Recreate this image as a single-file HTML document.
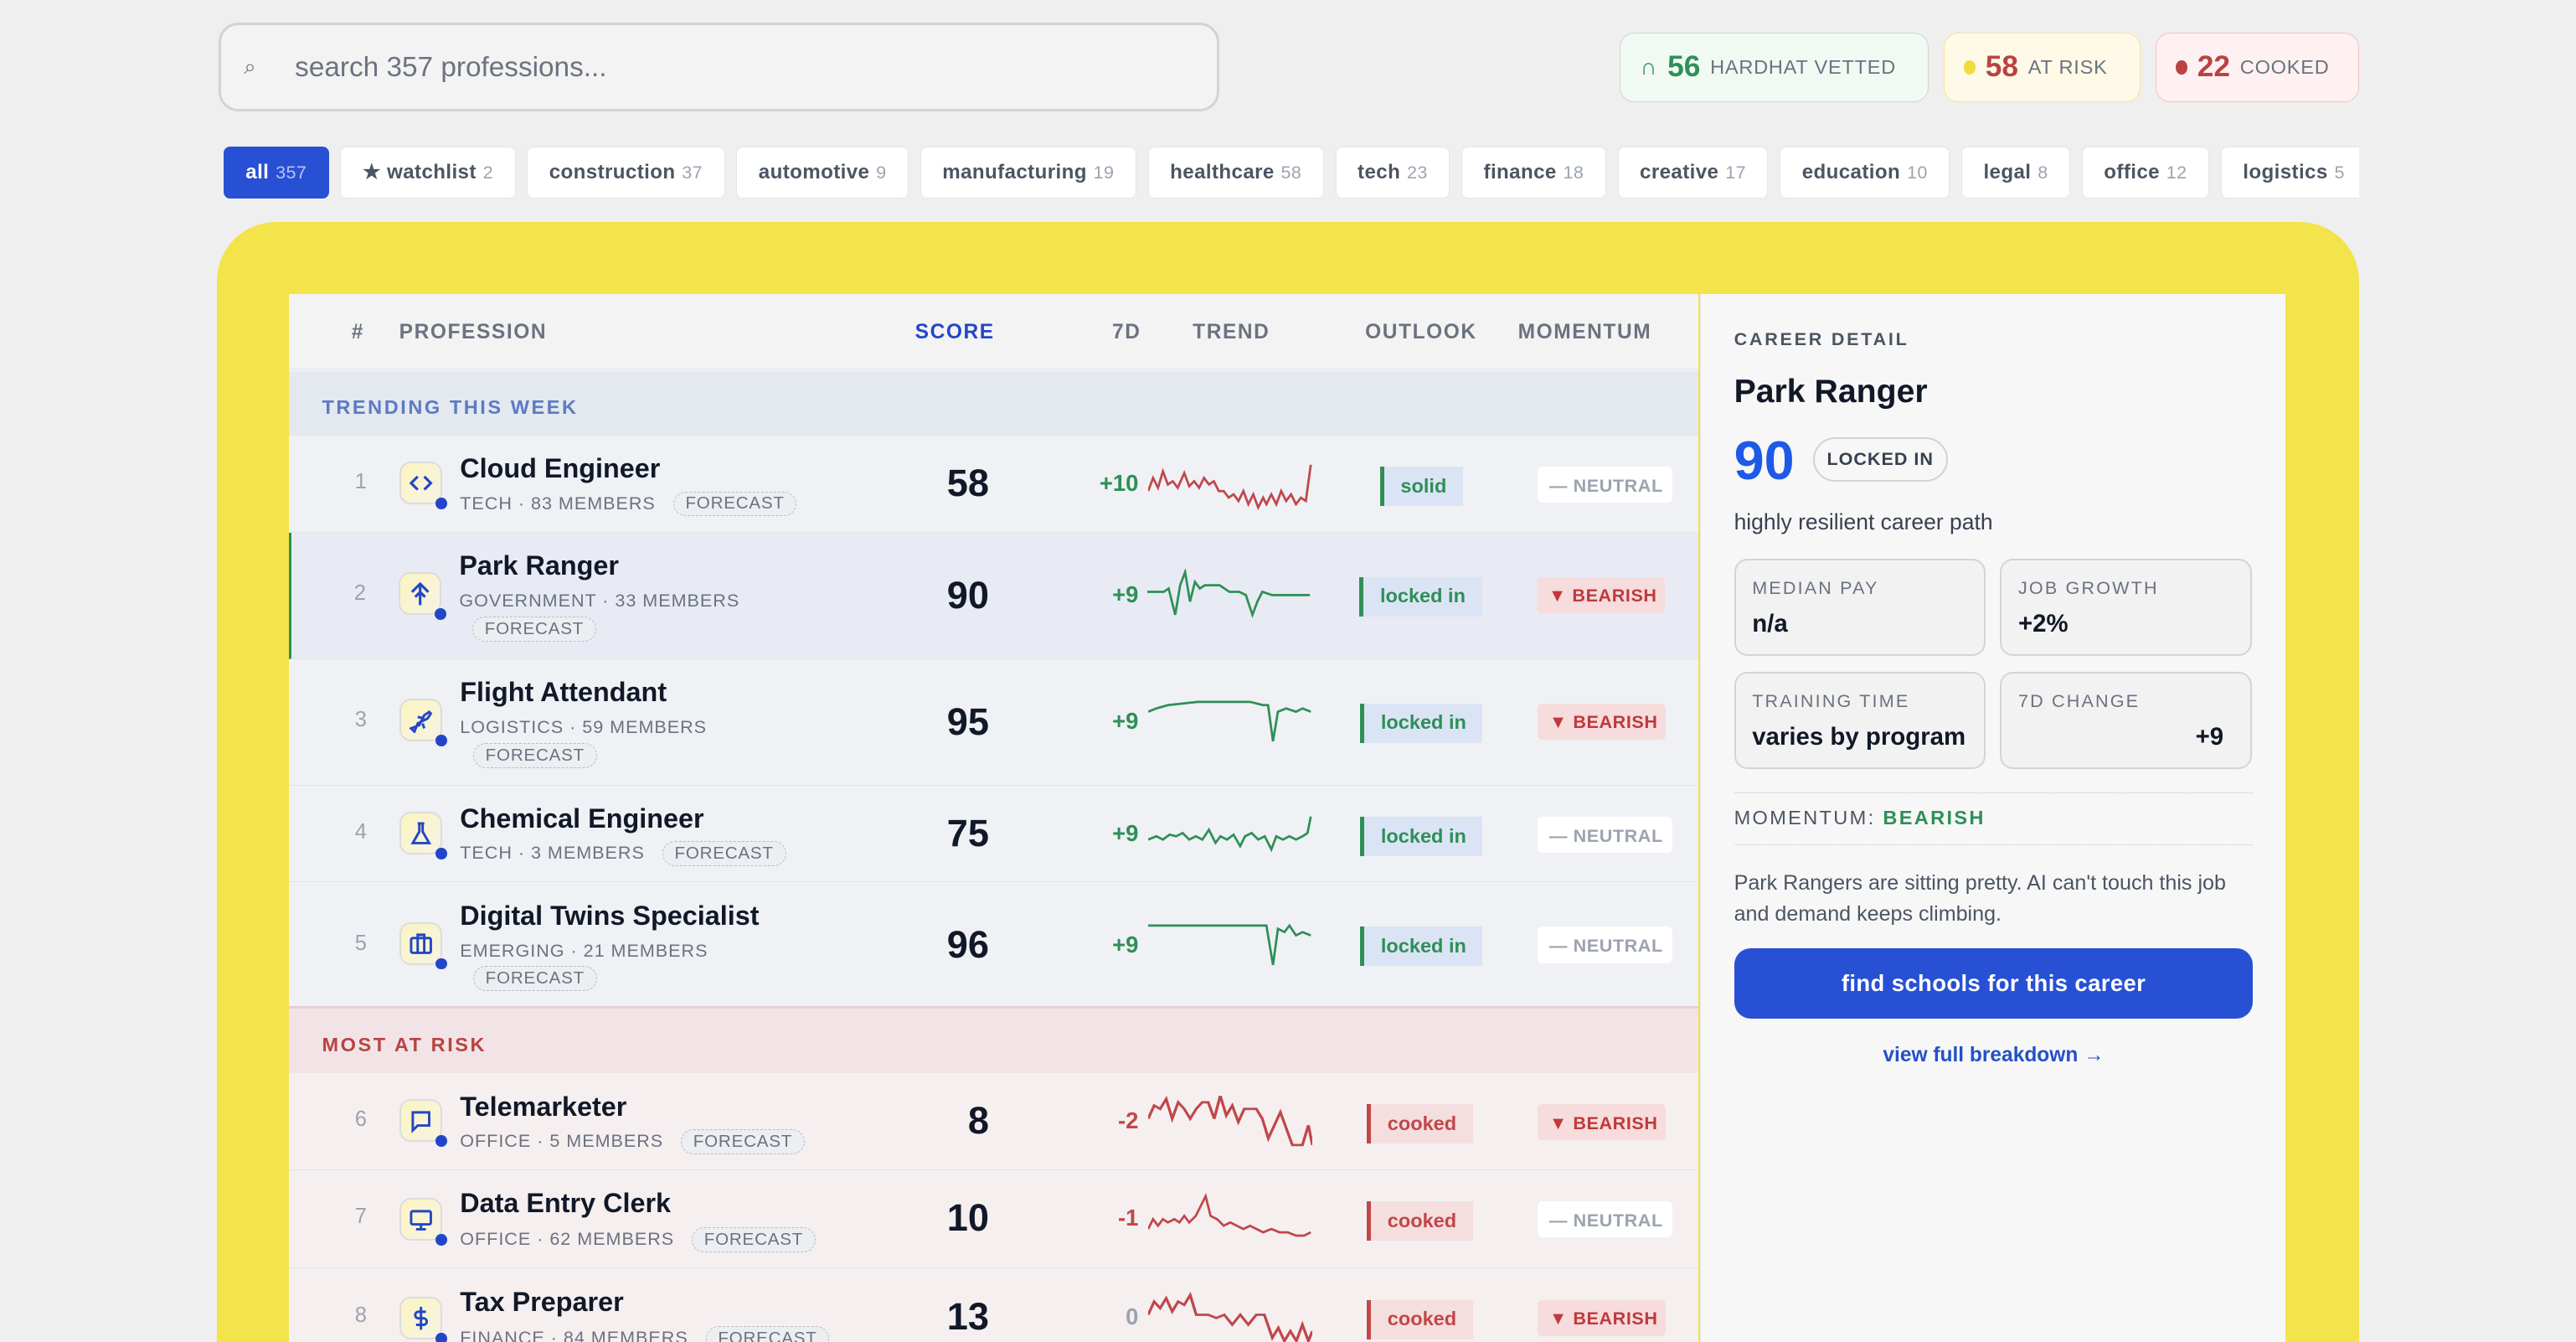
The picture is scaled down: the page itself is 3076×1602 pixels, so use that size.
<!DOCTYPE html>
<html><head><meta charset="utf-8">
<style>
*{box-sizing:border-box;margin:0;padding:0}
html,body{width:3076px;height:1602px;overflow:hidden;background:#efefef}
#r{zoom:1.9617;width:1568px;height:817px;position:relative;font-family:"Liberation Sans",sans-serif;color:#111827;overflow:hidden}
.abs{position:absolute}
.search{left:133px;top:14px;width:609px;height:54px;border:2px solid #d0d4d4;border-radius:12px;background:#f3f3f3}
.search span{position:absolute;top:16px;font-size:17px;color:#6b7280}
.badge{top:20px;height:42px;border-radius:9px;border:1px solid;display:flex;align-items:center;padding:0 12px;gap:6px;font-size:12px;color:#6b7280;letter-spacing:.4px;white-space:nowrap}
.badge b{font-size:18px;letter-spacing:0}
.chips{left:136px;top:89px;width:1300px;height:32px;display:flex;gap:7px;overflow:hidden}
.chip{flex:none;height:32px;border:1px solid #e3e6ea;border-radius:4px;background:#fff;padding:0 13px;display:flex;align-items:center;gap:4px;font-size:12.3px;font-weight:bold;color:#4b5563;letter-spacing:.2px;white-space:nowrap}
.chip i{font-style:normal;font-size:11px;color:#9ca3af;font-weight:normal}
.yel{left:132px;top:135px;width:1304px;height:720px;background:#f2e44a;border-radius:36px}
.table{left:176px;top:179px;width:858px;height:640px;background:#eff1f5}
.th{position:absolute;top:0;left:0;width:858px;height:46px;background:#f3f3f3;border-bottom:1px solid #e2e5ea}
.th span{position:absolute;top:16px;font-size:12.5px;font-weight:bold;color:#6b7280;letter-spacing:.8px}
.sec{position:absolute;left:0;width:858px;height:39px;font-size:12px;font-weight:bold;letter-spacing:1.3px;padding:15px 0 0 20px}
.row{position:absolute;left:0;width:858px;border-bottom:1px solid #e2e5ea}
.row .n{position:absolute;left:40px;font-size:13px;color:#9ca3af}
.ic{position:absolute;left:67px;width:26px;height:26px;border-radius:7px;background:linear-gradient(135deg,#fbf4c0,#f7f3e3);border:1.5px solid #dcdcdc}
.ic svg{position:absolute;left:4px;top:4px}
.ic:after{content:"";position:absolute;right:-4px;bottom:-4px;width:7px;height:7px;border-radius:50%;background:#2346c8}
.nm{position:absolute;left:104px;font-size:16.5px;font-weight:bold;color:#111827;white-space:nowrap}
.meta{position:absolute;left:104px;font-size:11px;color:#6b7280;letter-spacing:.5px;white-space:nowrap}
.fc{display:inline-block;border:1px dashed #b9bec6;border-radius:8px;padding:1px 7px;font-size:10.5px;color:#6b7280;background:#eceef1;letter-spacing:.4px}
.sc{position:absolute;right:432px;font-size:23px;font-weight:bold;color:#111827}
.d7{position:absolute;right:341px;font-size:14px;font-weight:bold}
.sp{position:absolute;left:523px}
.ol{position:absolute;height:24px;border-left:3px solid;font-size:12px;font-weight:bold;padding:5px 10px 0 10px;white-space:nowrap}
.mo{position:absolute;left:760px;height:22px;font-size:11px;font-weight:bold;letter-spacing:.3px;padding:5px 0 0 7px;border-radius:3px;white-space:nowrap;overflow:hidden}
.neu{background:#fff;color:#9ca3af;width:82px}
.bea{background:#f6dcdc;color:#c0393c;width:78px}
.det{left:1035px;top:179px;width:356px;height:640px;background:#f7f7f7}
.det .t{position:absolute;left:20px;white-space:nowrap}
.box{position:absolute;width:153px;height:59px;border:1.5px solid #d4d4d4;border-radius:8px;background:#f2f2f2}
.box .l{position:absolute;left:10px;top:10px;font-size:11px;color:#6b7280;letter-spacing:1.1px;white-space:nowrap}
.box .v{position:absolute;left:10px;top:30px;font-size:15px;font-weight:bold;color:#111827;white-space:nowrap}
</style></head><body>
<div id="r">
<div class="abs search"><span style="left:14px;font-size:13px;top:18px">⌕</span><span style="left:45px">search 357 professions...</span></div>

<div class="abs badge" style="left:986px;width:188px;background:#f0faf3;border-color:#cdd6d2"><span style="color:#2f8f57;font-size:14px">∩</span><b style="color:#2f8f57">56</b>HARDHAT VETTED</div>
<div class="abs badge" style="left:1183px;width:120px;background:#fffae8;border-color:#fbe38a"><span style="width:7px;height:9px;border-radius:50%;background:#f0dc3c;display:inline-block"></span><b style="color:#b94343">58</b>AT RISK</div>
<div class="abs badge" style="left:1312px;width:124px;background:#fff1f1;border-color:#f0c4c4"><span style="width:7px;height:9px;border-radius:50%;background:#b94343;display:inline-block"></span><b style="color:#b94343">22</b>COOKED</div>

<div class="abs chips">
<div class="chip" style="background:#2750d4;border-color:#2750d4;color:#fff">all <i style="color:#b9c6f0">357</i></div>
<div class="chip">★ watchlist <i>2</i></div>
<div class="chip">construction <i>37</i></div>
<div class="chip">automotive <i>9</i></div>
<div class="chip">manufacturing <i>19</i></div>
<div class="chip">healthcare <i>58</i></div>
<div class="chip">tech <i>23</i></div>
<div class="chip">finance <i>18</i></div>
<div class="chip">creative <i>17</i></div>
<div class="chip">education <i>10</i></div>
<div class="chip">legal <i>8</i></div>
<div class="chip">office <i>12</i></div>
<div class="chip">logistics <i>5</i></div>
</div>

<div class="abs yel"></div>
<div class="abs table">
<div class="th"><span style="left:38px">#</span><span style="left:67px">PROFESSION</span><span style="left:381px;color:#2346c8">SCORE</span><span style="left:501px">7D</span><span style="left:550px">TREND</span><span style="left:655px">OUTLOOK</span><span style="left:748px">MOMENTUM</span></div>
<div class="sec" style="top:47px;background:#e4e8ef;color:#5b7bc4">TRENDING THIS WEEK</div>

<div class="row" style="top:86px;height:59px">
<span class="n" style="top:21px">1</span>
<div class="ic" style="top:16px"><svg width="16" height="16" viewBox="0 0 16 16" fill="none" stroke="#2346c8" stroke-width="1.6"><path d="M6 4L2 8l4 4M10 4l4 4-4 4"/></svg></div>
<span class="nm" style="top:11px">Cloud Engineer</span>
<span class="meta" style="top:34px">TECH · 83 MEMBERS &nbsp; <span class="fc">FORECAST</span></span>
<span class="sc" style="top:16px">58</span>
<span class="d7" style="top:21px;color:#2f8f57">+10</span>
<svg class="sp" style="top:14px" width="100" height="32" viewBox="0 0 100 32" preserveAspectRatio="none"><polyline fill="none" stroke="#c0474a" stroke-width="1.4" points="0,20 3,12 6,18 9,8 12,16 15,14 18,18 22,9 25,17 28,14 31,18 34,12 37,16 40,14 43,20 46,20 49,24 52,22 55,26 58,20 61,28 64,22 67,30 70,24 72,28 75,22 78,28 81,20 84,26 87,22 90,28 93,24 96,26 99,4"/></svg>
<span class="ol" style="left:664px;top:19px;background:#dbe4f5;border-color:#2f8f57;color:#2f8f57">solid</span>
<span class="mo neu" style="top:19px">— NEUTRAL</span>
</div>
<div class="row" style="top:145px;height:77px;background:#e8ebf3;border-left:2px solid #2f8f57">
<span class="n" style="top:30px;left:38px">2</span>
<div class="ic" style="top:24px;left:65px"><svg width="16" height="16" viewBox="0 0 16 16" fill="none" stroke="#2346c8" stroke-width="1.6"><path d="M8 15V2M3 7l5-5 5 5M5 10l3-3 3 3"/></svg></div>
<span class="nm" style="top:11px;left:102px">Park Ranger</span>
<span class="meta" style="top:35px;left:102px">GOVERNMENT · 33 MEMBERS</span>
<span class="meta" style="top:51px;left:110px"><span class="fc">FORECAST</span></span>
<span class="sc" style="top:25px">90</span>
<span class="d7" style="top:30px;color:#2f8f57">+9</span>
<svg class="sp" style="top:22px;left:521px" width="100" height="32" viewBox="0 0 100 32" preserveAspectRatio="none"><polyline fill="none" stroke="#2f8f57" stroke-width="1.4" points="0,14 10,14 13,12 17,28 20,10 23,2 26,20 29,8 32,12 35,10 44,10 50,14 56,14 60,16 64,28 67,20 70,14 76,16 80,16 99,16"/></svg>
<span class="ol" style="left:650px;top:27px;background:#dbe4f5;border-color:#2f8f57;color:#2f8f57">locked in</span>
<span class="mo bea" style="top:27px;left:758px">▼ BEARISH</span>
</div>
<div class="row" style="top:222px;height:77px">
<span class="n" style="top:30px">3</span>
<div class="ic" style="top:24px"><svg width="16" height="16" viewBox="0 0 16 16" fill="none" stroke="#2346c8" stroke-width="1.5"><path d="M2 13l5-2 3-6 3-2 1 1-2 3-6 3-2 5zM6 6l4 1M9 10l1 3"/></svg></div>
<span class="nm" style="top:11px">Flight Attendant</span>
<span class="meta" style="top:35px">LOGISTICS · 59 MEMBERS</span>
<span class="meta" style="top:51px;left:112px"><span class="fc">FORECAST</span></span>
<span class="sc" style="top:25px">95</span>
<span class="d7" style="top:30px;color:#2f8f57">+9</span>
<svg class="sp" style="top:22px" width="100" height="32" viewBox="0 0 100 32" preserveAspectRatio="none"><polyline fill="none" stroke="#2f8f57" stroke-width="1.4" points="0,10 5,8 12,6 30,4 62,4 70,6 73,6 76,28 79,10 84,8 90,10 94,8 99,10"/></svg>
<span class="ol" style="left:652px;top:27px;background:#dbe4f5;border-color:#2f8f57;color:#2f8f57">locked in</span>
<span class="mo bea" style="top:27px">▼ BEARISH</span>
</div>
<div class="row" style="top:299px;height:59px">
<span class="n" style="top:21px">4</span>
<div class="ic" style="top:16px"><svg width="16" height="16" viewBox="0 0 16 16" fill="none" stroke="#2346c8" stroke-width="1.5"><path d="M6 2h4M7 2v5l-4 7h10l-4-7V2"/></svg></div>
<span class="nm" style="top:11px">Chemical Engineer</span>
<span class="meta" style="top:34px">TECH · 3 MEMBERS &nbsp; <span class="fc">FORECAST</span></span>
<span class="sc" style="top:16px">75</span>
<span class="d7" style="top:21px;color:#2f8f57">+9</span>
<svg class="sp" style="top:13px" width="100" height="32" viewBox="0 0 100 32" preserveAspectRatio="none"><polyline fill="none" stroke="#2f8f57" stroke-width="1.4" points="0,20 5,18 9,20 13,17 17,18 21,16 25,20 29,18 33,20 37,14 41,22 44,18 48,20 52,17 56,24 59,18 63,16 67,20 71,18 75,26 78,18 82,20 86,18 90,20 94,18 97,16 99,6"/></svg>
<span class="ol" style="left:652px;top:19px;background:#dbe4f5;border-color:#2f8f57;color:#2f8f57">locked in</span>
<span class="mo neu" style="top:19px">— NEUTRAL</span>
</div>
<div class="row" style="top:358px;height:77px;border-bottom:2px solid #e8cdd1">
<span class="n" style="top:30px">5</span>
<div class="ic" style="top:24px"><svg width="16" height="16" viewBox="0 0 16 16" fill="none" stroke="#2346c8" stroke-width="1.5"><rect x="2" y="5" width="12" height="9" rx="1"/><path d="M6 5V3h4v2M6 5v9M10 5v9"/></svg></div>
<span class="nm" style="top:11px">Digital Twins Specialist</span>
<span class="meta" style="top:35px">EMERGING · 21 MEMBERS</span>
<span class="meta" style="top:51px;left:112px"><span class="fc">FORECAST</span></span>
<span class="sc" style="top:25px">96</span>
<span class="d7" style="top:30px;color:#2f8f57">+9</span>
<svg class="sp" style="top:22px" width="100" height="32" viewBox="0 0 100 32" preserveAspectRatio="none"><polyline fill="none" stroke="#2f8f57" stroke-width="1.4" points="0,4 72,4 76,28 79,6 83,8 86,4 90,10 94,8 99,10"/></svg>
<span class="ol" style="left:652px;top:27px;background:#dbe4f5;border-color:#2f8f57;color:#2f8f57">locked in</span>
<span class="mo neu" style="top:27px">— NEUTRAL</span>
</div>

<div class="sec" style="top:435px;background:#f2e4e6;color:#b94343">MOST AT RISK</div>
<div class="row" style="top:474px;height:59px;background:#f5eff0">
<span class="n" style="top:21px">6</span>
<div class="ic" style="top:16px"><svg width="16" height="16" viewBox="0 0 16 16" fill="none" stroke="#2346c8" stroke-width="1.5"><path d="M3 3h10v8H6l-3 3z"/></svg></div>
<span class="nm" style="top:11px">Telemarketer</span>
<span class="meta" style="top:34px">OFFICE · 5 MEMBERS &nbsp; <span class="fc">FORECAST</span></span>
<span class="sc" style="top:16px">8</span>
<span class="d7" style="top:21px;color:#c0474a">-2</span>
<svg class="sp" style="top:14px" width="100" height="32" viewBox="0 0 82 32" preserveAspectRatio="none"><polyline fill="none" stroke="#c0474a" stroke-width="1.4" points="0,14 3,6 6,8 9,2 12,14 15,4 18,8 21,14 24,8 27,4 30,4 33,14 36,0 39,12 42,6 45,16 48,8 54,8 57,14 60,26 63,18 66,10 69,20 72,30 77,30 80,18 82,30"/></svg>
<span class="ol" style="left:656px;top:19px;background:#f5dede;border-color:#c0474a;color:#c0474a">cooked</span>
<span class="mo bea" style="top:19px">▼ BEARISH</span>
</div>
<div class="row" style="top:533px;height:60px;background:#f5eff0">
<span class="n" style="top:21px">7</span>
<div class="ic" style="top:17px"><svg width="16" height="16" viewBox="0 0 16 16" fill="none" stroke="#2346c8" stroke-width="1.5"><rect x="2" y="3" width="12" height="8" rx="1"/><path d="M8 11v3M5 14h6"/></svg></div>
<span class="nm" style="top:11px">Data Entry Clerk</span>
<span class="meta" style="top:35px">OFFICE · 62 MEMBERS &nbsp; <span class="fc">FORECAST</span></span>
<span class="sc" style="top:16px">10</span>
<span class="d7" style="top:21px;color:#c0474a">-1</span>
<svg class="sp" style="top:14px" width="100" height="32" viewBox="0 0 100 32" preserveAspectRatio="none"><polyline fill="none" stroke="#c0474a" stroke-width="1.4" points="0,22 3,16 6,20 9,16 12,18 16,16 19,18 22,14 25,18 29,14 32,8 35,2 38,14 42,16 46,20 50,18 54,20 58,22 62,20 66,22 70,24 75,22 80,24 85,24 90,26 95,26 99,24"/></svg>
<span class="ol" style="left:656px;top:19px;background:#f5dede;border-color:#c0474a;color:#c0474a">cooked</span>
<span class="mo neu" style="top:19px">— NEUTRAL</span>
</div>
<div class="row" style="top:593px;height:60px;background:#f5eff0">
<span class="n" style="top:21px">8</span>
<div class="ic" style="top:17px"><svg width="16" height="16" viewBox="0 0 16 16" fill="none" stroke="#2346c8" stroke-width="1.5"><path d="M8 1v14M11 4H6.5a2 2 0 000 4h3a2 2 0 010 4H5"/></svg></div>
<span class="nm" style="top:11px">Tax Preparer</span>
<span class="meta" style="top:35px">FINANCE · 84 MEMBERS &nbsp; <span class="fc">FORECAST</span></span>
<span class="sc" style="top:16px">13</span>
<span class="d7" style="top:21px;color:#9ca3af">0</span>
<svg class="sp" style="top:14px" width="100" height="32" viewBox="0 0 82 32" preserveAspectRatio="none"><polyline fill="none" stroke="#c0474a" stroke-width="1.4" points="0,14 3,6 6,10 9,4 12,12 15,6 18,8 21,2 24,14 30,14 34,16 38,14 42,20 46,14 50,20 54,14 58,14 62,28 65,22 68,30 71,24 74,30 77,20 80,30 82,24"/></svg>
<span class="ol" style="left:656px;top:19px;background:#f5dede;border-color:#c0474a;color:#c0474a">cooked</span>
<span class="mo bea" style="top:19px">▼ BEARISH</span>
</div>
</div>

<div class="abs det" style="border-left:1px solid #e5e7eb">
<span class="t" style="top:21px;font-size:11px;font-weight:bold;letter-spacing:1.4px;color:#4b5563">CAREER DETAIL</span>
<span class="t" style="top:48px;font-size:20px;font-weight:bold">Park Ranger</span>
<span class="t" style="top:82px;font-size:33px;font-weight:bold;color:#1f5ae6">90</span>
<span class="abs" style="left:68px;top:87px;width:82px;height:27px;border:1.5px solid #cfd2d6;border-radius:14px;font-size:11px;font-weight:bold;letter-spacing:.5px;color:#374151;text-align:center;line-height:24px;white-space:nowrap">LOCKED IN</span>
<span class="t" style="top:131px;font-size:13.5px;color:#374151">highly resilient career path</span>
<div class="box" style="left:20px;top:161px"><span class="l">MEDIAN PAY</span><span class="v">n/a</span></div>
<div class="box" style="left:182px;top:161px"><span class="l">JOB GROWTH</span><span class="v">+2%</span></div>
<div class="box" style="left:20px;top:230px"><span class="l">TRAINING TIME</span><span class="v">varies by program</span></div>
<div class="box" style="left:182px;top:230px"><span class="l">7D CHANGE</span><span class="v" style="left:auto;right:16px">+9</span></div>
<div class="abs" style="left:20px;top:303px;width:316px;border-top:1px dotted #b9bec6"></div>
<span class="t" style="top:312px;font-size:12px;letter-spacing:1.2px;color:#4b5563">MOMENTUM: <b style="color:#2f8f57">BEARISH</b></span>
<div class="abs" style="left:20px;top:335px;width:316px;border-top:1px dotted #b9bec6"></div>
<span class="t" style="top:349px;width:320px;font-size:12.8px;line-height:19px;color:#4b5563;white-space:normal">Park Rangers are sitting pretty. AI can't touch this job and demand keeps climbing.</span>
<div class="abs" style="left:20px;top:398px;width:316px;height:43px;background:#2750d4;border-radius:10px;color:#fff;font-size:14px;font-weight:bold;text-align:center;line-height:43px;letter-spacing:.2px">find schools for this career</div>
<span class="abs" style="left:20px;width:316px;top:456px;text-align:center;font-size:12.5px;font-weight:bold;color:#2450c8">view full breakdown →</span>
</div>
</div>
</body></html>
